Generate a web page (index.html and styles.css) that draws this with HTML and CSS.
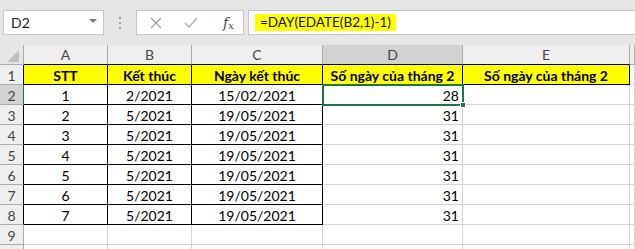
FILE: index.html
```html
<!DOCTYPE html>
<html>
<head>
<meta charset="utf-8">
<link rel="stylesheet" href="styles.css">
</head>
<body>
<div class="toolbar">
  <div class="namebox"><span>D2</span><span class="caret"></span></div>
  <div class="dots"><i></i><i></i><i></i></div>
  <div class="fxbox">
    <svg class="ico" width="14" height="14" viewBox="0 0 14 14"><path d="M2 2 L12 12 M12 2 L2 12" stroke="#a6a6a6" stroke-width="1.4" fill="none"/></svg>
    <svg class="ico" width="16" height="14" viewBox="0 0 16 14"><path d="M2 7 L6 11 L14 2" stroke="#b4b4b4" stroke-width="1.6" fill="none"/></svg>
    <span class="fx">f<sub>x</sub></span>
  </div>
  <div class="formula"><span class="hl">=DAY(EDATE(B2,1)-1)</span></div>
</div>
<div class="sheet">
  <div class="c corner"><svg width="24" height="20" viewBox="0 0 24 20"><path d="M19 5 L19 17 L7 17 Z" fill="#c0c0c0"/></svg></div>
  <div class="c ch hb">A</div>
  <div class="c ch hb">B</div>
  <div class="c ch hb">C</div>
  <div class="c ch hb sel">D</div>
  <div class="c ch hb">E</div>
  <div class="c ch"></div>

  <div class="c rh rb">1</div>
  <div class="c y bk">STT</div>
  <div class="c y bk">Kết thúc</div>
  <div class="c y bk">Ngày kết thúc</div>
  <div class="c y bk">Số ngày của tháng 2</div>
  <div class="c y bk">Số ngày của tháng 2</div>
  <div class="c"></div>

  <div class="c rh rsel">2</div>
  <div class="c bk ctr">1</div>
  <div class="c bk ctr">2/2021</div>
  <div class="c bk ctr">15/02/2021</div>
  <div class="c num active">28<span class="selbox"></span><span class="handle"></span></div>
  <div class="c"></div>
  <div class="c"></div>

  <div class="c rh rb">3</div>
  <div class="c bk ctr">2</div>
  <div class="c bk ctr">5/2021</div>
  <div class="c bk ctr">19/05/2021</div>
  <div class="c num">31</div>
  <div class="c"></div>
  <div class="c"></div>

  <div class="c rh rb">4</div>
  <div class="c bk ctr">3</div>
  <div class="c bk ctr">5/2021</div>
  <div class="c bk ctr">19/05/2021</div>
  <div class="c num">31</div>
  <div class="c"></div>
  <div class="c"></div>

  <div class="c rh rb">5</div>
  <div class="c bk ctr">4</div>
  <div class="c bk ctr">5/2021</div>
  <div class="c bk ctr">19/05/2021</div>
  <div class="c num">31</div>
  <div class="c"></div>
  <div class="c"></div>

  <div class="c rh rb">6</div>
  <div class="c bk ctr">5</div>
  <div class="c bk ctr">5/2021</div>
  <div class="c bk ctr">19/05/2021</div>
  <div class="c num">31</div>
  <div class="c"></div>
  <div class="c"></div>

  <div class="c rh rb">7</div>
  <div class="c bk ctr">6</div>
  <div class="c bk ctr">5/2021</div>
  <div class="c bk ctr">19/05/2021</div>
  <div class="c num">31</div>
  <div class="c"></div>
  <div class="c"></div>

  <div class="c rh rb">8</div>
  <div class="c bk ctr">7</div>
  <div class="c bk ctr">5/2021</div>
  <div class="c bk ctr">19/05/2021</div>
  <div class="c num">31</div>
  <div class="c"></div>
  <div class="c"></div>

  <div class="c rh">9</div>
  <div class="c"></div>
  <div class="c"></div>
  <div class="c"></div>
  <div class="c"></div>
  <div class="c"></div>
  <div class="c"></div>

  <div class="c rh last"></div>
  <div class="c last"></div>
  <div class="c last"></div>
  <div class="c last"></div>
  <div class="c last"></div>
  <div class="c last"></div>
  <div class="c last"></div>
</div>
</body>
</html>
```

FILE: styles.css
```css
* { box-sizing: border-box; }
html, body { margin: 0; padding: 0; }
body {
  width: 635px;
  height: 249px;
  overflow: hidden;
  background: #fff;
  font-family: Lato, "Open Sans", sans-serif;
  font-size: 14px;
  color: #000;
}
.toolbar {
  height: 45px;
  background: #e6e6e6;
  display: flex;
  align-items: flex-start;
  padding-top: 10px;
  padding-left: 3px;
}
.namebox {
  width: 101px;
  height: 25px;
  background: #fff;
  border: 1px solid #c6c6c6;
  display: flex;
  align-items: center;
  justify-content: space-between;
  padding: 0 6px 0 7px;
  font-size: 14px;
  color: #222;
}
.caret {
  width: 0; height: 0;
  border-left: 4px solid transparent;
  border-right: 4px solid transparent;
  border-top: 4px solid #7a7a7a;
  margin-top: -3px;
}
.dots {
  width: 32px;
  height: 25px;
  display: flex;
  flex-direction: column;
  align-items: center;
  justify-content: center;
  gap: 3px;
}
.dots i {
  display: block;
  width: 2px; height: 2px;
  background: #9e9e9e;
}
.fxbox {
  width: 108px;
  height: 25px;
  background: #fff;
  border: 1px solid #c6c6c6;
  display: flex;
  align-items: center;
  padding-left: 12px;
  gap: 20px;
}
.fxbox .ico { display: block; }
.fx {
  font-family: "DejaVu Serif", "Liberation Serif", serif;
  font-style: italic;
  font-size: 14px;
  color: #4a4a4a;
  margin-left: 4px;
}
.fx sub { font-size: 10px; vertical-align: -1px; }
.formula {
  margin-left: 4px;
  flex: 1;
  height: 25px;
  background: #fff;
  border: 1px solid #c6c6c6;
  border-right: none;
  padding-left: 6px;
  display: flex;
  align-items: center;
}
.hl {
  background: #ffff00;
  padding: 0 5px 0 5px;
  height: 17px;
  line-height: 17px;
  font-size: 13.5px;
  color: #111;
}
.sheet {
  display: grid;
  grid-template-columns: 24px 84px 84px 131px 140px 167px 5px;
  grid-template-rows: repeat(10, 20px) 4px;
}
.c {
  border-right: 1px solid #d4d4d4;
  border-bottom: 1px solid #d4d4d4;
  line-height: 21px;
  white-space: nowrap;
  position: relative;
}
.c.last { border-bottom: none; }
.corner { background: #e6e6e6; border-right: 1px solid #ababab; border-bottom: 1px solid #ababab; overflow: hidden; }
.corner svg { display: block; }
.ch {
  background: #efefef;
  border-right: 1px solid #ababab;
  border-bottom: 1px solid #ababab;
  text-align: center;
  color: #444;
  line-height: 20px;
}
.ch.hb { border-bottom-color: #000; }
.ch.sel { background: #d2d2d2; }
.rh {
  background: #efefef;
  border-right: 1px solid #ababab;
  border-bottom: 1px solid #ababab;
  text-align: center;
  color: #444;
}
.rh.rb { border-right-color: #000; }
.rh.rsel { background: #d2d2d2; border-right: 1px solid #217346; }
.y {
  background: #ffff00;
  font-weight: 700;
  text-align: center;
}
.bk { border-right-color: #000; border-bottom-color: #000; }
.ctr { text-align: center; }
.num { text-align: right; padding-right: 3px; }
.active { z-index: 2; }
.selbox {
  position: absolute;
  left: -1px; top: -1px;
  width: 142px; height: 22px;
  border: 2px solid #217346;
  pointer-events: none;
}
.handle {
  position: absolute;
  right: -4px; bottom: -4px;
  width: 6px; height: 6px;
  background: #217346;
  border: 1px solid #fff;
}
```
